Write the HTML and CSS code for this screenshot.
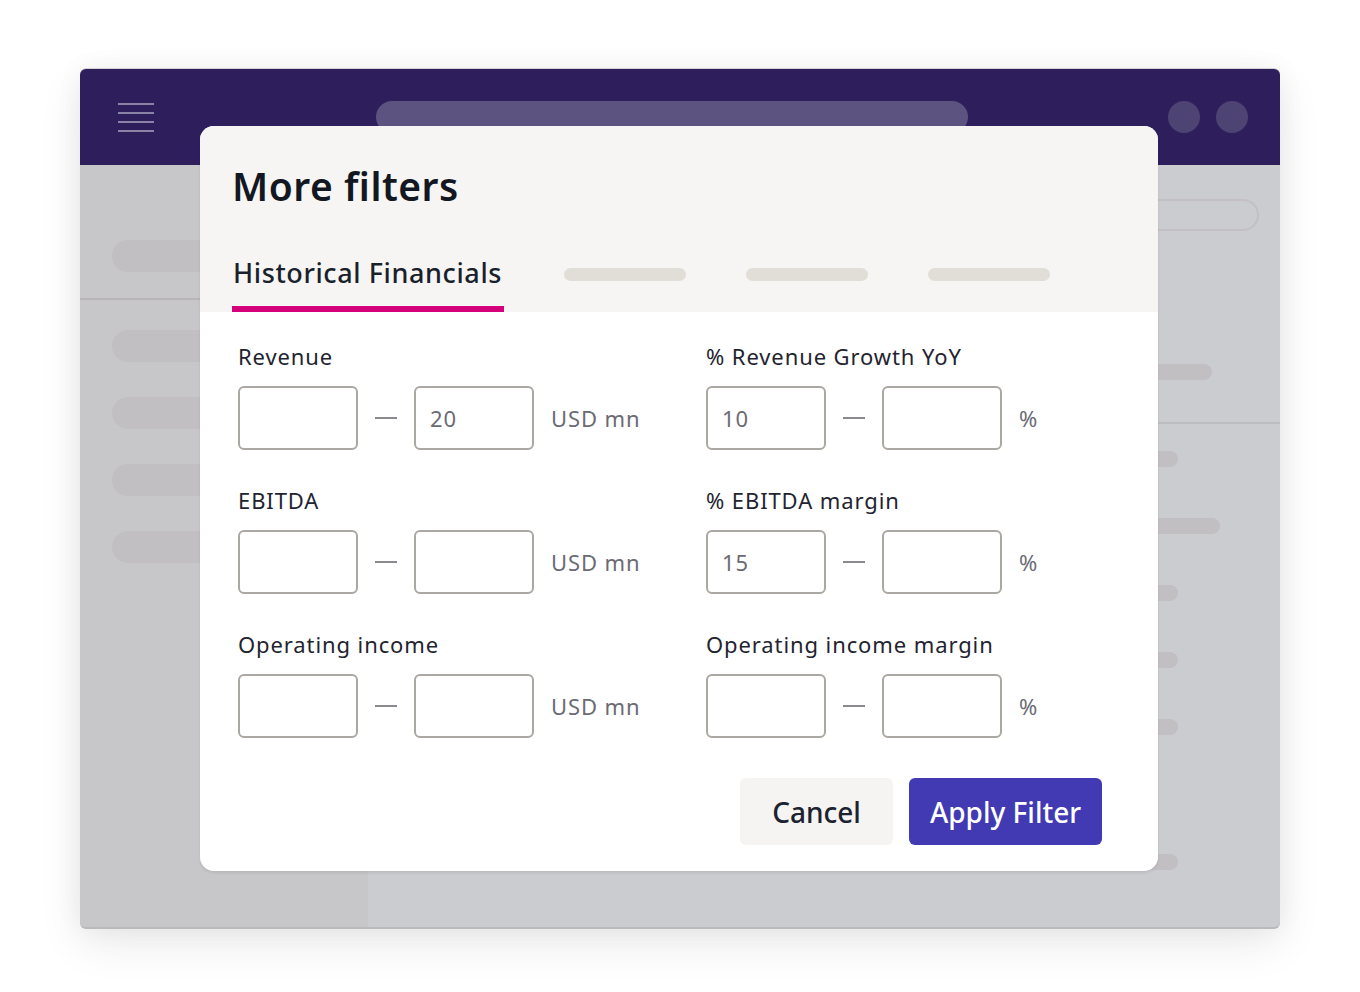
FILE: index.html
```html
<!DOCTYPE html>
<html lang="en">
<head>
<meta charset="utf-8">
<title>More filters</title>
<link rel="stylesheet" href="styles.css">
</head>
<body>
<div class="stage">
  <div class="window">
    <header class="topbar">
      <div class="hamburger"><span></span><span></span><span></span><span></span></div>
      <div class="searchbar"></div>
      <div class="circles"><span class="circle"></span><span class="circle"></span></div>
    </header>
    <div class="app">
      <aside class="sidebar">
        <div class="sb-pill sb-first"></div>
        <div class="sb-line"></div>
        <div class="sb-list">
          <div class="sb-pill"></div>
          <div class="sb-pill"></div>
          <div class="sb-pill"></div>
          <div class="sb-pill"></div>
        </div>
      </aside>
      <main class="main">
        <div class="outline-pill"></div>
        <div class="m-pill m-top"></div>
        <div class="m-line"></div>
        <div class="m-list">
          <div class="m-pill w-short"></div>
          <div class="m-pill w-long"></div>
          <div class="m-pill w-short"></div>
          <div class="m-pill w-short"></div>
          <div class="m-pill w-short"></div>
          <div class="m-pill w-short m-last"></div>
        </div>
      </main>
    </div>

    <section class="modal">
      <div class="modal-head">
        <h1 class="modal-title">More filters</h1>
        <nav class="tabs">
          <div class="tab active">Historical Financials</div>
          <div class="tab-ph"></div>
          <div class="tab-ph"></div>
          <div class="tab-ph"></div>
        </nav>
      </div>
      <div class="modal-body">
        <div class="grid">
          <div class="field">
            <div class="label">Revenue</div>
            <div class="range"><div class="box"></div><span class="dash"></span><div class="box">20</div><span class="unit">USD mn</span></div>
          </div>
          <div class="field">
            <div class="label">% Revenue Growth YoY</div>
            <div class="range"><div class="box">10</div><span class="dash"></span><div class="box"></div><span class="unit">%</span></div>
          </div>
          <div class="field">
            <div class="label">EBITDA</div>
            <div class="range"><div class="box"></div><span class="dash"></span><div class="box"></div><span class="unit">USD mn</span></div>
          </div>
          <div class="field">
            <div class="label">% EBITDA margin</div>
            <div class="range"><div class="box">15</div><span class="dash"></span><div class="box"></div><span class="unit">%</span></div>
          </div>
          <div class="field">
            <div class="label">Operating income</div>
            <div class="range"><div class="box"></div><span class="dash"></span><div class="box"></div><span class="unit">USD mn</span></div>
          </div>
          <div class="field">
            <div class="label">Operating income margin</div>
            <div class="range"><div class="box"></div><span class="dash"></span><div class="box"></div><span class="unit">%</span></div>
          </div>
        </div>
        <div class="actions">
          <button class="btn btn-cancel">Cancel</button>
          <button class="btn btn-apply">Apply Filter</button>
        </div>
      </div>
    </section>
  </div>
</div>
</body>
</html>
```

FILE: styles.css
```css
* { box-sizing: border-box; }
html, body { margin: 0; padding: 0; background: #ffffff; }
body { font-family: "Noto Sans", "Open Sans", sans-serif; }

.stage { padding: 69px 80px 0 80px; width: 1360px; height: 992px; }

.window {
  position: relative;
  width: 1200px;
  height: 858px;
  border-radius: 6px;
  background: #cbccd0;
  box-shadow: 0 -1px 0 #d2d2d4, 0 2px 0 #b9b9be, 0 16px 44px rgba(0,0,0,0.09), 0 0 28px rgba(0,0,0,0.05);
}

.topbar {
  height: 96px;
  background: #2e1f5c;
  border-radius: 6px 6px 0 0;
  display: flex;
  align-items: center;
  padding: 0 32px 0 38px;
}
.hamburger { display: flex; flex-direction: column; gap: 7px; width: 36px; }
.hamburger span { display: block; height: 2px; background: #8b82a8; }
.searchbar {
  margin-left: 222px;
  width: 592px;
  height: 32px;
  border-radius: 16px;
  background: #5d5380;
}
.circles { margin-left: auto; display: flex; gap: 16px; }
.circle { width: 32px; height: 32px; border-radius: 50%; background: #4e4473; display: block; }

.app { display: flex; height: 762px; border-radius: 0 0 6px 6px; overflow: hidden; }
.sidebar { width: 288px; background: #c7c7c9; padding-top: 75px; }
.sb-pill { height: 32px; width: 220px; margin-left: 32px; border-radius: 16px; background: #c1bfc2; }
.sb-line { height: 2px; background: #b9b5b5; margin-top: 26px; }
.sb-list { display: flex; flex-direction: column; gap: 35px; margin-top: 30px; }

.main { flex: 1; background: #cbccd0; display: flex; flex-direction: column; align-items: flex-end; padding-top: 34px; }
.outline-pill { width: 400px; height: 32px; border: 2px solid #c3bfc3; border-radius: 16px; margin-right: 21px; }
.m-pill { height: 16px; border-radius: 8px; background: #c2bfc3; }
.m-top { width: 300px; margin-right: 68px; margin-top: 133px; }
.m-line { align-self: stretch; height: 2px; background: #bdbdc1; margin-top: 42px; }
.m-list { display: flex; flex-direction: column; align-items: flex-end; gap: 51px; margin-top: 27px; }
.w-short { width: 300px; margin-right: 102px; }
.w-long { width: 300px; margin-right: 60px; }
.m-last { margin-top: 68px; }

/* modal */
.modal {
  position: absolute;
  left: 120px;
  top: 57px;
  width: 958px;
  height: 745px;
  background: #ffffff;
  border-radius: 14px;
  overflow: hidden;
  box-shadow: 0 2px 3px rgba(0,0,0,0.08);
  display: flex;
  flex-direction: column;
}
.modal-head { background: #f6f5f3; height: 186px; padding: 0 0 0 32px; display: flex; flex-direction: column; }
.modal-title {
  margin: 0;
  padding-top: 33px;
  font-size: 39px;
  line-height: 54px;
  font-weight: 600;
  letter-spacing: 0.5px;
  color: #131722;
}
.tabs { margin-top: auto; display: flex; align-items: flex-start; }
.tab {
  font-size: 27px;
  line-height: 38px;
  font-weight: 500;
  letter-spacing: 0.6px;
  color: #1a1f2c;
  padding: 0 2px 14px 1px;
  border-bottom: 6px solid #d4007a;
}
.tab-ph { width: 122px; height: 13px; border-radius: 7px; background: #e1ddd7; margin-top: 14px; margin-left: 60px; }

.modal-body { flex: 1; padding: 29px 56px 26px 38px; display: flex; flex-direction: column; }
.grid { display: grid; grid-template-columns: 468px 1fr; row-gap: 35px; }
.label { font-size: 22px; line-height: 30px; letter-spacing: 0.9px; color: #1f2430; }
.range { display: flex; align-items: center; margin-top: 15px; }
.box {
  width: 120px;
  height: 64px;
  border: 2px solid #aba7a3;
  border-radius: 6px;
  font-size: 22px;
  letter-spacing: 0.9px;
  color: #6b6b74;
  padding-left: 14px;
  display: flex;
  align-items: center;
}
.dash { width: 22px; height: 1.5px; background: #8a8a8f; margin: 0 17px; display: block; }
.unit { font-size: 22px; letter-spacing: 0.9px; color: #6b6b74; margin-left: 17px; }

.actions { margin-top: auto; display: flex; justify-content: flex-end; gap: 16px; }
.btn {
  font-family: "Noto Sans", "Open Sans", sans-serif;
  font-size: 28px;
  font-weight: 500;
  height: 67px;
  border: none;
  border-radius: 6px;
  padding: 0;
  cursor: pointer;
}
.btn-cancel { width: 153px; background: #f5f4f2; color: #1c2230; }
.btn-apply { width: 193px; background: #413ab3; color: #ffffff; }
```
